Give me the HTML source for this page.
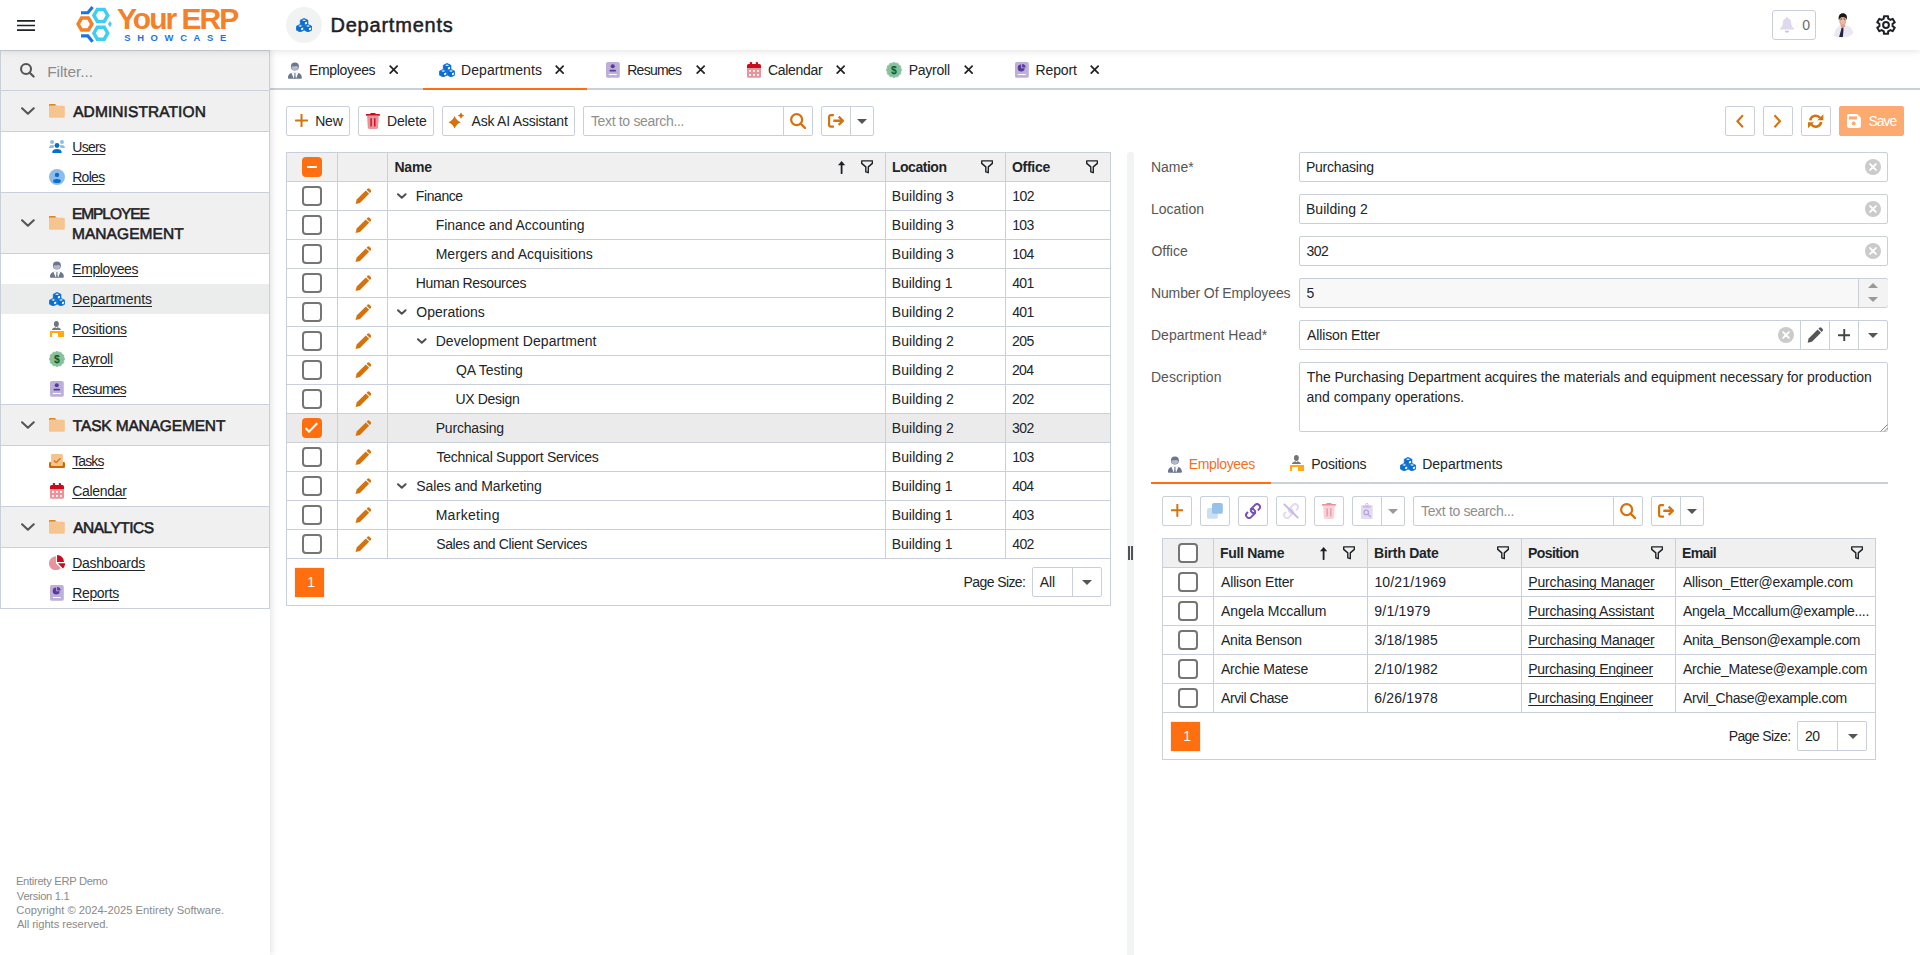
<!DOCTYPE html><html lang="en"><head><meta charset="utf-8"><title>Departments</title><style>
*{box-sizing:border-box;margin:0;padding:0}
html,body{width:1920px;height:955px;overflow:hidden;background:#fff}
body{font-family:"Liberation Sans",sans-serif;font-size:14px;color:#212529;position:relative}
.a{position:absolute}
.t{position:absolute;white-space:nowrap}
svg{display:block}
#hdr{left:0;top:0;width:1920px;height:50px;background:#fff;box-shadow:0 1px 7px rgba(0,0,0,.12);z-index:5}
#side{left:0;top:50px;width:270px;height:905px;background:#fff;z-index:4;box-shadow:1px 0 7px rgba(0,0,0,.13)}
.hl{position:absolute;left:0;width:270px;height:1px;background:#c9d0da}
.gh{position:absolute;left:1px;width:268px;background:#f0f0f0}
.btn{position:absolute;height:30px;border:1px solid #c9d0da;border-radius:2px;background:#fff}
.vl{position:absolute;width:1px;background:#c9d0da}
.cb{position:absolute;width:20px;height:20px;border:2px solid #757575;border-radius:4px;background:#fff}
.cb.on{border:none;background:#ff6f0f}
.pg{position:absolute;width:29px;height:29px;background:#ff6f0f;color:#fff;box-shadow:0 0 0 0.6px #f3e6da}
h1,h2{font-weight:normal;font-size:inherit}
u{text-decoration:underline;text-underline-offset:1.5px;text-decoration-thickness:1px}
</style></head><body>
<header id="hdr" class="a">
<div class="a" style="left:17px;top:19.6px"><svg width="18" height="11" viewBox="0 0 18 11" ><path d="M0 0.9h18M0 5.5h18M0 10.1h18" stroke="#1d2126" stroke-width="1.7" fill="none"/></svg></div>
<div class="a" style="left:70px;top:0px"><svg width="180" height="48" viewBox="0 0 180 48" ><polygon points="21.90,24.10 18.45,30.08 11.55,30.08 8.10,24.10 11.55,18.12 18.45,18.12" fill="none" stroke="#f4802a" stroke-width="3.5" stroke-linejoin="miter"/><polygon points="37.70,15.40 34.25,21.38 27.35,21.38 23.90,15.40 27.35,9.42 34.25,9.42" fill="none" stroke="#3fcdf3" stroke-width="3.5" stroke-linejoin="miter"/><polygon points="37.70,33.20 34.25,39.18 27.35,39.18 23.90,33.20 27.35,27.22 34.25,27.22" fill="none" stroke="#3fcdf3" stroke-width="3.5" stroke-linejoin="miter"/><path d="M11 12.8 L17.8 12.8 L22.6 6.9" fill="none" stroke="#1f72e2" stroke-width="3.1"/><path d="M11 35.9 L17.8 35.9 L22.6 41.8" fill="none" stroke="#1f72e2" stroke-width="3.1"/><path d="M38 24.1 L39.9 21 L41.8 24.1 L39.9 27.2 Z" fill="#3fcdf3"/><text x="47" y="28.6" font-family="Liberation Sans, sans-serif" font-weight="bold" font-size="30" fill="#f4802a" textLength="122.3" lengthAdjust="spacing">Your ERP</text><text x="54.2" y="40.8" font-family="Liberation Sans, sans-serif" font-weight="bold" font-size="9.4" fill="#1f72e2" letter-spacing="6.7">SHOWCASE</text></svg></div>
<div class="a" style="left:286px;top:7px;width:36px;height:36px;border-radius:18px;background:#f1f2f2"></div>
<div class="a" style="left:296px;top:18px"><svg width="16.2" height="14.4" viewBox="0 0 16.2 14.4" ><path d="M4.3 2.3 L8.1 0.4 L11.9 2.3 L11.9 6.1 L8.1 8 L4.3 6.1Z" fill="#0a6ed1" stroke="#0a6ed1" stroke-width="0.8" stroke-linejoin="round"/><path d="M0.4 8.3 L4.2 6.4 L8.0 8.3 L8.0 12.1 L4.2 14.0 L0.4 12.1Z" fill="#0a6ed1" stroke="#0a6ed1" stroke-width="0.8" stroke-linejoin="round"/><path d="M8.2 8.3 L12.0 6.4 L15.8 8.3 L15.8 12.1 L12.0 14.0 L8.2 12.1Z" fill="#0a6ed1" stroke="#0a6ed1" stroke-width="0.8" stroke-linejoin="round"/><path d="M6.050000000000001 2.15 L8.05 1.4 L10.05 2.15 L8.05 2.9Z" fill="#fff"/><path d="M8.9 4.5 L11.0 3.65 L11.0 5.75 L8.9 6.6Z" fill="#fff"/><path d="M2.3 7.9 L4.3 7.15 L6.3 7.9 L4.3 8.65Z" fill="#fff"/><path d="M5.1499999999999995 10.25 L7.25 9.4 L7.25 11.5 L5.1499999999999995 12.350000000000001Z" fill="#fff"/><path d="M10.1 7.9 L12.1 7.15 L14.1 7.9 L12.1 8.65Z" fill="#fff"/><path d="M12.95 10.25 L15.05 9.4 L15.05 11.5 L12.95 12.350000000000001Z" fill="#fff"/></svg></div>
<h1 class="t" style="left:330.46px;top:12px;line-height:26px;font-size:20px;letter-spacing:0.787px;color:#1d2126;-webkit-text-stroke:0.5px #1d2126;">Departments</h1>
<div class="a" style="left:1772px;top:10px;width:44px;height:30px;border:1px solid #c9d0da;border-radius:3px"></div>
<div class="a" style="left:1780px;top:17px"><svg width="14" height="16" viewBox="0 0 14 16" ><path d="M7 0.9 C4.2 0.9 2.8 3.2 2.8 5.8 C2.8 8.8 1.6 10.4 0 11.6 L0 12.6 L14 12.6 L14 11.6 C12.4 10.4 11.2 8.8 11.2 5.8 C11.2 3.2 9.8 0.9 7 0.9Z" fill="#e0d8ef"/><circle cx="7" cy="1" r="1" fill="#e0d8ef"/><path d="M5 13.8 L9 13.8 A2 2 0 0 1 5 13.8Z" fill="#cbbbe9"/></svg></div>
<span class="t" style="left:1802.15px;top:16px;line-height:19px;color:#6a6a6a;">0</span>
<div class="a" style="left:1831px;top:12px"><svg width="24" height="26" viewBox="0 0 24 26" ><path d="M3 24 C3.4 17.6 7 13.6 11.6 13 C17 12.6 21.6 15.6 22.2 21 C20 24.2 16.4 25.4 12 25.4 C8.6 25.4 5.4 25.2 3 24Z" fill="#ebe7f3"/><path d="M9.6 11.6 L14 11.6 L14.2 14.6 L11.6 16.4 L9.6 14.6Z" fill="#d9a28c"/><path d="M10.5 15.7 L12.3 15.7 L12.5 17.5 L11.9 24.9 L8.1 24.9 L10.2 17.5Z" fill="#25254a"/><ellipse cx="11.7" cy="8.7" rx="3.4" ry="4.5" fill="#dfa992"/><ellipse cx="11.7" cy="9.6" rx="2.2" ry="2.6" fill="#e8bba6"/><path d="M7.9 8.2 C6.8 3.6 9.2 1.3 11.8 1.3 C14.8 1.3 16.8 3.4 15.6 8 C15 5.8 13.8 4.7 11.6 4.9 C9.6 5.1 8.6 6.2 7.9 8.2Z" fill="#1f1613"/><path d="M9.4 7.2 L11 7 M12.6 7 L14.2 7.2" stroke="#5a3b30" stroke-width="0.9"/></svg></div>
<div class="a" style="left:1876px;top:15px"><svg width="20" height="20" viewBox="0 0 20 20" ><polygon points="7.95,1.13 12.05,1.13 12.18,3.67 14.40,4.94 16.66,3.79 18.70,7.34 16.58,8.72 16.58,11.28 18.70,12.66 16.66,16.21 14.40,15.06 12.18,16.33 12.05,18.87 7.95,18.87 7.82,16.33 5.60,15.06 3.34,16.21 1.30,12.66 3.42,11.28 3.42,8.72 1.30,7.34 3.34,3.79 5.60,4.94 7.82,3.67" fill="none" stroke="#1d2126" stroke-width="2" stroke-linejoin="round"/><circle cx="10" cy="10" r="2.9" fill="none" stroke="#1d2126" stroke-width="2"/></svg></div>
</header>
<nav id="side" class="a">
<div class="a" style="left:0px;top:0px;width:270px;height:559px;border:1px solid #c9d0da;border-bottom:none"></div>
<div class="gh" style="top:1px;height:39px"></div>
<div class="a" style="left:20.2px;top:13.299999999999997px"><svg width="14.6" height="14.6" viewBox="0 0 16.1 16.1" ><circle cx="6.65" cy="6.65" r="5.5" fill="none" stroke="#555" stroke-width="2.3"/><path d="M10.7 10.7 L15 15" stroke="#555" stroke-width="2.4" stroke-linecap="round"/></svg></div>
<span class="t" style="left:47.13px;top:11px;line-height:21px;font-size:15.5px;letter-spacing:-0.078px;color:#8c8c8c;">Filter...</span>
<div class="hl" style="top:40px"></div>
<div class="gh" style="top:41px;height:40px"></div>
<div class="hl" style="top:81px"></div>
<div class="a" style="left:21.2px;top:57.099999999999994px"><svg width="13.8" height="8.23" viewBox="0 0 13.80 8.23" ><path d="M1.05 1.26 L6.90 6.76 L12.75 1.26" fill="none" stroke="#555" stroke-width="2.1" stroke-linecap="round" stroke-linejoin="round"/></svg></div>
<div class="a" style="left:49.1px;top:54px"><svg width="15.8" height="13.8" viewBox="0.5 0.6 16 13.8" ><path d="M0.5 1.6 Q0.5 0.6 1.5 0.6 L6 0.6 Q6.8 0.6 7.4 1.2 L8.4 2.4 L2 2.4 Q0.5 2.4 0.5 3.6Z" fill="#d98324"/><path d="M0.5 3.6 Q0.5 2.4 1.8 2.4 L15.2 2.4 Q16.5 2.4 16.5 3.6 L16.5 13.2 Q16.5 14.4 15.2 14.4 L1.8 14.4 Q0.5 14.4 0.5 13.2Z" fill="#f6c48e"/></svg></div>
<h2 class="t" style="left:73.17px;top:52px;line-height:21px;font-size:15.5px;letter-spacing:0.095px;color:#1d2126;-webkit-text-stroke:0.55px #1d2126;text-rendering:geometricPrecision;">ADMINISTRATION</h2>
<div class="a" style="left:49px;top:90.1px"><svg width="16" height="13" viewBox="0 0 16 13" ><circle cx="3.05" cy="2" r="2" fill="#8bbcea"/><circle cx="12.95" cy="2" r="2" fill="#8bbcea"/><path d="M0 7.9 C0.2 6 1.4 5 3 5 C4 5 4.8 5.4 5.2 6 L4.4 7.9Z" fill="#8bbcea"/><path d="M16 7.9 C15.8 6 14.6 5 13 5 C12 5 11.2 5.4 10.8 6 L11.6 7.9Z" fill="#8bbcea"/><circle cx="8" cy="5.5" r="2.45" fill="#0a6ed1"/><path d="M3.2 12.2 C3.4 10 5.4 8.9 8 8.9 C10.6 8.9 12.6 10 12.8 12.2 Q12.8 12.9 12.1 12.9 L3.9 12.9 Q3.2 12.9 3.2 12.2Z" fill="#0a6ed1"/></svg></div>
<a class="t" style="left:72.20px;top:88px;line-height:19px;letter-spacing:-0.672px;"><u>Users</u></a>
<div class="a" style="left:49px;top:119.19999999999999px"><svg width="16" height="16" viewBox="0 0 16 16" ><circle cx="8" cy="8" r="8" fill="#8bbcea"/><circle cx="8" cy="5.9" r="2.2" fill="#0a6ed1"/><ellipse cx="8" cy="12" rx="3.9" ry="2.1" fill="#0a6ed1"/></svg></div>
<a class="t" style="left:72.20px;top:118px;line-height:19px;letter-spacing:-0.699px;"><u>Roles</u></a>
<div class="hl" style="top:142px"></div>
<div class="gh" style="top:143px;height:60px"></div>
<div class="hl" style="top:203px"></div>
<div class="a" style="left:21.2px;top:169.1px"><svg width="13.8" height="8.23" viewBox="0 0 13.80 8.23" ><path d="M1.05 1.26 L6.90 6.76 L12.75 1.26" fill="none" stroke="#555" stroke-width="2.1" stroke-linecap="round" stroke-linejoin="round"/></svg></div>
<div class="a" style="left:49.1px;top:166px"><svg width="15.8" height="13.8" viewBox="0.5 0.6 16 13.8" ><path d="M0.5 1.6 Q0.5 0.6 1.5 0.6 L6 0.6 Q6.8 0.6 7.4 1.2 L8.4 2.4 L2 2.4 Q0.5 2.4 0.5 3.6Z" fill="#d98324"/><path d="M0.5 3.6 Q0.5 2.4 1.8 2.4 L15.2 2.4 Q16.5 2.4 16.5 3.6 L16.5 13.2 Q16.5 14.4 15.2 14.4 L1.8 14.4 Q0.5 14.4 0.5 13.2Z" fill="#f6c48e"/></svg></div>
<h2 class="t" style="left:71.93px;top:154px;line-height:21px;font-size:15.5px;letter-spacing:-1.049px;color:#1d2126;-webkit-text-stroke:0.55px #1d2126;text-rendering:geometricPrecision;">EMPLOYEE</h2>
<h2 class="t" style="left:71.93px;top:174px;line-height:21px;font-size:15.5px;letter-spacing:0.082px;color:#1d2126;-webkit-text-stroke:0.55px #1d2126;text-rendering:geometricPrecision;">MANAGEMENT</h2>
<div class="a" style="left:49px;top:211px"><svg width="16" height="17" viewBox="0 0 16 17" ><circle cx="7.9" cy="4.5" r="4" fill="#6a778d"/><path d="M4.5 4.9 C5.6 3.7 6.8 4.9 7.9 4.3 C9 3.7 10.2 3.9 11.3 4.9 C11.3 7.2 9.8 8.2 7.9 8.2 C6 8.2 4.5 7.2 4.5 4.9Z" fill="#b4b8cc"/><path d="M0.9 15.7 C0.9 12.6 3 11 5 10.7 L10.8 10.7 C12.8 11 14.9 12.6 14.9 15.7 Q14.9 16.7 13.9 16.7 L1.9 16.7 Q0.9 16.7 0.9 15.7Z" fill="#6a778d"/><path d="M4.3 10.5 L11.5 10.5 L9.3 16.1 L6.5 16.1Z" fill="#fff"/><path d="M7.1 10.9 L8.7 10.9 L8.45 11.9 L9 16.7 L6.8 16.7 L7.35 11.9Z" fill="#7c889c"/></svg></div>
<a class="t" style="left:72.20px;top:210px;line-height:19px;letter-spacing:-0.373px;"><u>Employees</u></a>
<div class="a" style="left:1px;top:234px;width:268px;height:30px;background:#ebeded"></div>
<div class="a" style="left:49px;top:241.89999999999998px"><svg width="16.2" height="14.4" viewBox="0 0 16.2 14.4" ><path d="M4.3 2.3 L8.1 0.4 L11.9 2.3 L11.9 6.1 L8.1 8 L4.3 6.1Z" fill="#0a6ed1" stroke="#0a6ed1" stroke-width="0.8" stroke-linejoin="round"/><path d="M0.4 8.3 L4.2 6.4 L8.0 8.3 L8.0 12.1 L4.2 14.0 L0.4 12.1Z" fill="#0a6ed1" stroke="#0a6ed1" stroke-width="0.8" stroke-linejoin="round"/><path d="M8.2 8.3 L12.0 6.4 L15.8 8.3 L15.8 12.1 L12.0 14.0 L8.2 12.1Z" fill="#0a6ed1" stroke="#0a6ed1" stroke-width="0.8" stroke-linejoin="round"/><path d="M6.050000000000001 2.15 L8.05 1.4 L10.05 2.15 L8.05 2.9Z" fill="#fff"/><path d="M8.9 4.5 L11.0 3.65 L11.0 5.75 L8.9 6.6Z" fill="#fff"/><path d="M2.3 7.9 L4.3 7.15 L6.3 7.9 L4.3 8.65Z" fill="#fff"/><path d="M5.1499999999999995 10.25 L7.25 9.4 L7.25 11.5 L5.1499999999999995 12.350000000000001Z" fill="#fff"/><path d="M10.1 7.9 L12.1 7.15 L14.1 7.9 L12.1 8.65Z" fill="#fff"/><path d="M12.95 10.25 L15.05 9.4 L15.05 11.5 L12.95 12.350000000000001Z" fill="#fff"/></svg></div>
<a class="t" style="left:72.20px;top:240px;line-height:19px;letter-spacing:-0.031px;"><u>Departments</u></a>
<div class="a" style="left:50px;top:271px"><svg width="14.2" height="16.2" viewBox="0 0 14.2 16.2" ><ellipse cx="6.4" cy="3" rx="2.45" ry="3" fill="#747474"/><path d="M1.9 9 C2.2 7.4 3.6 6.6 5.2 6.2 L6.4 7.3 L7.6 6.2 C9.2 6.6 10.7 7.4 11 9Z" fill="#747474"/><path d="M0 9.95 L14.2 9.95 L14.2 16.2 L8.05 16.2 L8.05 12.1 L2.05 12.1 L2.05 16.2 L0 16.2Z" fill="#ffab10"/></svg></div>
<a class="t" style="left:72.20px;top:270px;line-height:19px;letter-spacing:-0.245px;"><u>Positions</u></a>
<div class="a" style="left:49px;top:301px"><svg width="16" height="16" viewBox="0 0 16 16" ><polygon points="8.00,0.10 9.81,1.24 11.95,1.16 12.95,3.05 14.84,4.05 14.76,6.19 15.90,8.00 14.76,9.81 14.84,11.95 12.95,12.95 11.95,14.84 9.81,14.76 8.00,15.90 6.19,14.76 4.05,14.84 3.05,12.95 1.16,11.95 1.24,9.81 0.10,8.00 1.24,6.19 1.16,4.05 3.05,3.05 4.05,1.16 6.19,1.24" fill="#88c09c" stroke="#88c09c" stroke-width="0.6" stroke-linejoin="round"/><text x="8" y="11.6" text-anchor="middle" font-family="Liberation Sans, sans-serif" font-weight="bold" font-size="10.4" fill="#0b5a24">$</text></svg></div>
<a class="t" style="left:72.20px;top:300px;line-height:19px;letter-spacing:-0.328px;"><u>Payroll</u></a>
<div class="a" style="left:50.2px;top:331px"><svg width="13.8" height="15.8" viewBox="0 0 13.8 15.8" ><rect x="0" y="0" width="13.8" height="15.8" rx="1.9" fill="#bdb0d8"/><circle cx="6.75" cy="4.25" r="2.05" fill="#5b3aa0"/><rect x="3.5" y="7.8" width="6.5" height="1.7" rx="0.85" fill="#5b3aa0"/><rect x="2.8" y="12" width="8" height="1.05" fill="#fff"/></svg></div>
<a class="t" style="left:72.20px;top:330px;line-height:19px;letter-spacing:-0.747px;"><u>Resumes</u></a>
<div class="hl" style="top:354px"></div>
<div class="gh" style="top:355px;height:40px"></div>
<div class="hl" style="top:395px"></div>
<div class="a" style="left:21.2px;top:371.1px"><svg width="13.8" height="8.23" viewBox="0 0 13.80 8.23" ><path d="M1.05 1.26 L6.90 6.76 L12.75 1.26" fill="none" stroke="#555" stroke-width="2.1" stroke-linecap="round" stroke-linejoin="round"/></svg></div>
<div class="a" style="left:49.1px;top:368px"><svg width="15.8" height="13.8" viewBox="0.5 0.6 16 13.8" ><path d="M0.5 1.6 Q0.5 0.6 1.5 0.6 L6 0.6 Q6.8 0.6 7.4 1.2 L8.4 2.4 L2 2.4 Q0.5 2.4 0.5 3.6Z" fill="#d98324"/><path d="M0.5 3.6 Q0.5 2.4 1.8 2.4 L15.2 2.4 Q16.5 2.4 16.5 3.6 L16.5 13.2 Q16.5 14.4 15.2 14.4 L1.8 14.4 Q0.5 14.4 0.5 13.2Z" fill="#f6c48e"/></svg></div>
<h2 class="t" style="left:72.85px;top:366px;line-height:21px;font-size:15.5px;letter-spacing:-0.159px;color:#1d2126;-webkit-text-stroke:0.55px #1d2126;text-rendering:geometricPrecision;">TASK MANAGEMENT</h2>
<div class="a" style="left:49px;top:403.9px"><svg width="16" height="14.2" viewBox="0 0 16 14.2" ><path d="M0 9.4 Q0 8.05 1.3 8.05 L14.7 8.05 Q16 8.05 16 9.4 L16 12.4 Q16 14.2 14.2 14.2 L1.8 14.2 Q0 14.2 0 12.4Z" fill="#cf6a00"/><rect x="2.05" y="0" width="11.85" height="12.1" rx="1.3" fill="#f4c48e"/><path d="M4.9 6.4 L7.1 8.6 L11.6 4.35" fill="none" stroke="#d9761a" stroke-width="1.4"/></svg></div>
<a class="t" style="left:72.20px;top:402px;line-height:19px;letter-spacing:-0.897px;"><u>Tasks</u></a>
<div class="a" style="left:50px;top:433.3px"><svg width="14" height="15.8" viewBox="0 0 14 15.8" ><path d="M0 5.8 L14 5.8 L14 14.2 Q14 15.8 12.4 15.8 L1.6 15.8 Q0 15.8 0 14.2Z" fill="#e8949c"/><path d="M0 6 L0 3.6 Q0 2 1.6 2 L12.4 2 Q14 2 14 3.6 L14 6Z" fill="#cc0a1e"/><rect x="2.9" y="0" width="2.1" height="3" rx="0.5" fill="#cc0a1e"/><rect x="8.9" y="0" width="2.1" height="3" rx="0.5" fill="#cc0a1e"/><rect x="2.05" y="8.05" width="1.9" height="1.8" fill="#fff"/><rect x="2.05" y="12" width="1.9" height="1.8" fill="#fff"/><rect x="6" y="8.05" width="1.9" height="1.8" fill="#fff"/><rect x="6" y="12" width="1.9" height="1.8" fill="#fff"/><rect x="10" y="8.05" width="1.9" height="1.8" fill="#fff"/><rect x="10" y="12" width="1.9" height="1.8" fill="#fff"/></svg></div>
<a class="t" style="left:72.20px;top:432px;line-height:19px;letter-spacing:-0.302px;"><u>Calendar</u></a>
<div class="hl" style="top:456px"></div>
<div class="gh" style="top:457px;height:40px"></div>
<div class="hl" style="top:497px"></div>
<div class="a" style="left:21.2px;top:473.1px"><svg width="13.8" height="8.23" viewBox="0 0 13.80 8.23" ><path d="M1.05 1.26 L6.90 6.76 L12.75 1.26" fill="none" stroke="#555" stroke-width="2.1" stroke-linecap="round" stroke-linejoin="round"/></svg></div>
<div class="a" style="left:49.1px;top:470px"><svg width="15.8" height="13.8" viewBox="0.5 0.6 16 13.8" ><path d="M0.5 1.6 Q0.5 0.6 1.5 0.6 L6 0.6 Q6.8 0.6 7.4 1.2 L8.4 2.4 L2 2.4 Q0.5 2.4 0.5 3.6Z" fill="#d98324"/><path d="M0.5 3.6 Q0.5 2.4 1.8 2.4 L15.2 2.4 Q16.5 2.4 16.5 3.6 L16.5 13.2 Q16.5 14.4 15.2 14.4 L1.8 14.4 Q0.5 14.4 0.5 13.2Z" fill="#f6c48e"/></svg></div>
<h2 class="t" style="left:73.17px;top:468px;line-height:21px;font-size:15.5px;letter-spacing:-0.518px;color:#1d2126;-webkit-text-stroke:0.55px #1d2126;text-rendering:geometricPrecision;">ANALYTICS</h2>
<div class="a" style="left:49px;top:504.9px"><svg width="16.1" height="15.3" viewBox="0 0 16.1 15.3" ><path d="M6.95 1.3500000000000005 A6.95 6.95 0 1 0 11.86 13.21 L6.95 8.3Z" fill="#e8949c"/><path d="M8.05 0 A7 7 0 0 1 15.05 6.95 L8.05 6.95Z" fill="#cc0a1e"/><path d="M8.9 8.3 L16.1 8.3 A7.2 7.2 0 0 1 13.99 13.39Z" fill="#cc0a1e"/></svg></div>
<a class="t" style="left:72.20px;top:504px;line-height:19px;letter-spacing:-0.279px;"><u>Dashboards</u></a>
<div class="a" style="left:50.1px;top:535.2px"><svg width="13.8" height="15.8" viewBox="0 0 13.8 15.8" ><rect x="0" y="0" width="13.8" height="15.8" rx="1.9" fill="#bdb0d8"/><path d="M6.2 2.6 A3.5 3.5 0 1 0 9.7 6.3 L6.2 6.3Z" fill="#5b3aa0"/><path d="M7.1 1.9 A3.5 3.5 0 0 1 10.6 5.4 L7.1 5.4Z" fill="#5b3aa0"/><rect x="2.85" y="12" width="7.9" height="1.05" fill="#fff"/></svg></div>
<a class="t" style="left:72.20px;top:534px;line-height:19px;letter-spacing:-0.332px;"><u>Reports</u></a>
<div class="hl" style="top:558px"></div>
<span class="t" style="left:15.98px;top:824px;line-height:15px;font-size:11.2px;letter-spacing:-0.307px;color:#8a8a8a;">Entirety ERP Demo</span>
<span class="t" style="left:16.85px;top:839px;line-height:15px;font-size:11.2px;letter-spacing:-0.304px;color:#8a8a8a;">Version 1.1</span>
<span class="t" style="left:16.33px;top:853px;line-height:15px;font-size:11.2px;letter-spacing:0.013px;color:#8a8a8a;">Copyright © 2024-2025 Entirety Software.</span>
<span class="t" style="left:16.88px;top:867px;line-height:15px;font-size:11.2px;letter-spacing:-0.058px;color:#8a8a8a;">All rights reserved.</span>
</nav>
<div class="a" style="left:270px;top:88px;width:1650px;height:2px;background:#c9d0da"></div>
<div class="a" style="left:423px;top:88px;width:164px;height:2px;background:#ff6f0f"></div>
<div class="a" style="left:287px;top:61.5px"><svg width="16" height="17" viewBox="0 0 16 17" ><circle cx="7.9" cy="4.5" r="4" fill="#6a778d"/><path d="M4.5 4.9 C5.6 3.7 6.8 4.9 7.9 4.3 C9 3.7 10.2 3.9 11.3 4.9 C11.3 7.2 9.8 8.2 7.9 8.2 C6 8.2 4.5 7.2 4.5 4.9Z" fill="#b4b8cc"/><path d="M0.9 15.7 C0.9 12.6 3 11 5 10.7 L10.8 10.7 C12.8 11 14.9 12.6 14.9 15.7 Q14.9 16.7 13.9 16.7 L1.9 16.7 Q0.9 16.7 0.9 15.7Z" fill="#6a778d"/><path d="M4.3 10.5 L11.5 10.5 L9.3 16.1 L6.5 16.1Z" fill="#fff"/><path d="M7.1 10.9 L8.7 10.9 L8.45 11.9 L9 16.7 L6.8 16.7 L7.35 11.9Z" fill="#7c889c"/></svg></div>
<span class="t" style="left:308.95px;top:61px;line-height:19px;letter-spacing:-0.325px;">Employees</span>
<div class="a" style="left:388.8px;top:65px"><svg width="9.4" height="9.4" viewBox="0 0 9.4 9.4" ><path d="M0.7 0.7 L8.7 8.7 M8.7 0.7 L0.7 8.7" stroke="#222" stroke-width="1.7"/></svg></div>
<div class="a" style="left:438.9px;top:62.8px"><svg width="16.2" height="14.4" viewBox="0 0 16.2 14.4" ><path d="M4.3 2.3 L8.1 0.4 L11.9 2.3 L11.9 6.1 L8.1 8 L4.3 6.1Z" fill="#0a6ed1" stroke="#0a6ed1" stroke-width="0.8" stroke-linejoin="round"/><path d="M0.4 8.3 L4.2 6.4 L8.0 8.3 L8.0 12.1 L4.2 14.0 L0.4 12.1Z" fill="#0a6ed1" stroke="#0a6ed1" stroke-width="0.8" stroke-linejoin="round"/><path d="M8.2 8.3 L12.0 6.4 L15.8 8.3 L15.8 12.1 L12.0 14.0 L8.2 12.1Z" fill="#0a6ed1" stroke="#0a6ed1" stroke-width="0.8" stroke-linejoin="round"/><path d="M6.050000000000001 2.15 L8.05 1.4 L10.05 2.15 L8.05 2.9Z" fill="#fff"/><path d="M8.9 4.5 L11.0 3.65 L11.0 5.75 L8.9 6.6Z" fill="#fff"/><path d="M2.3 7.9 L4.3 7.15 L6.3 7.9 L4.3 8.65Z" fill="#fff"/><path d="M5.1499999999999995 10.25 L7.25 9.4 L7.25 11.5 L5.1499999999999995 12.350000000000001Z" fill="#fff"/><path d="M10.1 7.9 L12.1 7.15 L14.1 7.9 L12.1 8.65Z" fill="#fff"/><path d="M12.95 10.25 L15.05 9.4 L15.05 11.5 L12.95 12.350000000000001Z" fill="#fff"/></svg></div>
<span class="t" style="left:461.05px;top:61px;line-height:19px;letter-spacing:0.071px;">Departments</span>
<div class="a" style="left:554.6px;top:65px"><svg width="9.4" height="9.4" viewBox="0 0 9.4 9.4" ><path d="M0.7 0.7 L8.7 8.7 M8.7 0.7 L0.7 8.7" stroke="#222" stroke-width="1.7"/></svg></div>
<div class="a" style="left:606.2px;top:62px"><svg width="13.8" height="15.8" viewBox="0 0 13.8 15.8" ><rect x="0" y="0" width="13.8" height="15.8" rx="1.9" fill="#bdb0d8"/><circle cx="6.75" cy="4.25" r="2.05" fill="#5b3aa0"/><rect x="3.5" y="7.8" width="6.5" height="1.7" rx="0.85" fill="#5b3aa0"/><rect x="2.8" y="12" width="8" height="1.05" fill="#fff"/></svg></div>
<span class="t" style="left:627.25px;top:61px;line-height:19px;letter-spacing:-0.746px;">Resumes</span>
<div class="a" style="left:695.5px;top:65px"><svg width="9.4" height="9.4" viewBox="0 0 9.4 9.4" ><path d="M0.7 0.7 L8.7 8.7 M8.7 0.7 L0.7 8.7" stroke="#222" stroke-width="1.7"/></svg></div>
<div class="a" style="left:747px;top:62px"><svg width="14" height="15.8" viewBox="0 0 14 15.8" ><path d="M0 5.8 L14 5.8 L14 14.2 Q14 15.8 12.4 15.8 L1.6 15.8 Q0 15.8 0 14.2Z" fill="#e8949c"/><path d="M0 6 L0 3.6 Q0 2 1.6 2 L12.4 2 Q14 2 14 3.6 L14 6Z" fill="#cc0a1e"/><rect x="2.9" y="0" width="2.1" height="3" rx="0.5" fill="#cc0a1e"/><rect x="8.9" y="0" width="2.1" height="3" rx="0.5" fill="#cc0a1e"/><rect x="2.05" y="8.05" width="1.9" height="1.8" fill="#fff"/><rect x="2.05" y="12" width="1.9" height="1.8" fill="#fff"/><rect x="6" y="8.05" width="1.9" height="1.8" fill="#fff"/><rect x="6" y="12" width="1.9" height="1.8" fill="#fff"/><rect x="10" y="8.05" width="1.9" height="1.8" fill="#fff"/><rect x="10" y="12" width="1.9" height="1.8" fill="#fff"/></svg></div>
<span class="t" style="left:767.99px;top:61px;line-height:19px;letter-spacing:-0.31px;">Calendar</span>
<div class="a" style="left:835.5px;top:65px"><svg width="9.4" height="9.4" viewBox="0 0 9.4 9.4" ><path d="M0.7 0.7 L8.7 8.7 M8.7 0.7 L0.7 8.7" stroke="#222" stroke-width="1.7"/></svg></div>
<div class="a" style="left:886px;top:62px"><svg width="16" height="16" viewBox="0 0 16 16" ><polygon points="8.00,0.10 9.81,1.24 11.95,1.16 12.95,3.05 14.84,4.05 14.76,6.19 15.90,8.00 14.76,9.81 14.84,11.95 12.95,12.95 11.95,14.84 9.81,14.76 8.00,15.90 6.19,14.76 4.05,14.84 3.05,12.95 1.16,11.95 1.24,9.81 0.10,8.00 1.24,6.19 1.16,4.05 3.05,3.05 4.05,1.16 6.19,1.24" fill="#88c09c" stroke="#88c09c" stroke-width="0.6" stroke-linejoin="round"/><text x="8" y="11.6" text-anchor="middle" font-family="Liberation Sans, sans-serif" font-weight="bold" font-size="10.4" fill="#0b5a24">$</text></svg></div>
<span class="t" style="left:908.65px;top:61px;line-height:19px;letter-spacing:-0.218px;">Payroll</span>
<div class="a" style="left:963.5px;top:65px"><svg width="9.4" height="9.4" viewBox="0 0 9.4 9.4" ><path d="M0.7 0.7 L8.7 8.7 M8.7 0.7 L0.7 8.7" stroke="#222" stroke-width="1.7"/></svg></div>
<div class="a" style="left:1015.1px;top:62px"><svg width="13.8" height="15.8" viewBox="0 0 13.8 15.8" ><rect x="0" y="0" width="13.8" height="15.8" rx="1.9" fill="#bdb0d8"/><path d="M6.2 2.6 A3.5 3.5 0 1 0 9.7 6.3 L6.2 6.3Z" fill="#5b3aa0"/><path d="M7.1 1.9 A3.5 3.5 0 0 1 10.6 5.4 L7.1 5.4Z" fill="#5b3aa0"/><rect x="2.85" y="12" width="7.9" height="1.05" fill="#fff"/></svg></div>
<span class="t" style="left:1035.55px;top:61px;line-height:19px;letter-spacing:-0.134px;">Report</span>
<div class="a" style="left:1090px;top:65px"><svg width="9.4" height="9.4" viewBox="0 0 9.4 9.4" ><path d="M0.7 0.7 L8.7 8.7 M8.7 0.7 L0.7 8.7" stroke="#222" stroke-width="1.7"/></svg></div>
<div class="btn" style="left:286px;top:106px;width:64px;"><div class="a" style="left:7.6px;top:7.1px"><svg width="13" height="13" viewBox="0 0 13 13" ><path d="M6.5 0.6 L6.5 12.4 M0.6 6.5 L12.4 6.5" stroke="#d6720c" stroke-width="2" stroke-linecap="round"/></svg></div><span class="t" style="left:28.15px;top:5px;line-height:19px;letter-spacing:-0.196px;">New</span></div>
<div class="btn" style="left:358px;top:106px;width:76px;"><div class="a" style="left:7px;top:6.1px"><svg width="13.9" height="15.9" viewBox="0 0 13.9 15.9" ><path d="M0 1.6 Q0 1 0.6 1 L4 1 L4.6 0.3 Q4.9 0 5.3 0 L8.6 0 Q9 0 9.3 0.3 L9.9 1 L13.3 1 Q13.9 1 13.9 1.6 L13.9 2.8 L0 2.8Z" fill="#cc0a1e"/><path d="M1.1 2.8 L12.8 2.8 L12.1 14.4 Q12 15.9 10.5 15.9 L3.4 15.9 Q1.9 15.9 1.8 14.4Z" fill="#e8949c"/><path d="M5.1 5.8 L5.1 12.9 M8.8 5.8 L8.8 12.9" stroke="#cc0a1e" stroke-width="1.4" stroke-linecap="round"/></svg></div><span class="t" style="left:28.05px;top:5px;line-height:19px;letter-spacing:-0.16px;">Delete</span></div>
<div class="btn" style="left:442px;top:106px;width:133px;"><div class="a" style="left:5.3px;top:5.2px"><svg width="17" height="17" viewBox="0 0 17 17" ><path d="M6.6 3.999999999999999 Q8.336 8.463999999999999 12.8 10.2 Q8.336 11.936 6.6 16.4 Q4.863999999999999 11.936 0.39999999999999947 10.2 Q4.863999999999999 8.463999999999999 6.6 3.999999999999999Z" fill="#d6720c"/><path d="M13 0.3999999999999999 Q13.896 2.7039999999999997 16.2 3.6 Q13.896 4.496 13 6.800000000000001 Q12.104 4.496 9.8 3.6 Q12.104 2.7039999999999997 13 0.3999999999999999Z" fill="#d6720c"/></svg></div><span class="t" style="left:28.57px;top:5px;line-height:19px;letter-spacing:-0.225px;">Ask AI Assistant</span></div>
<div class="btn" style="left:583px;top:106px;width:230px;"><span class="t" style="left:6.89px;top:5px;line-height:19px;letter-spacing:-0.327px;color:#8f8f8f;">Text to search...</span><div class="vl" style="left:199px;top:0;height:28px"></div><div class="a" style="left:205.9px;top:5.9px"><svg width="16.1" height="16.1" viewBox="0 0 16.1 16.1" ><circle cx="6.65" cy="6.65" r="5.5" fill="none" stroke="#d6720c" stroke-width="2.3"/><path d="M10.7 10.7 L15 15" stroke="#d6720c" stroke-width="2.4" stroke-linecap="round"/></svg></div></div>
<div class="btn" style="left:821px;top:106px;width:53px;"><div class="a" style="left:6px;top:7.1px"><svg width="16.4" height="13.8" viewBox="0 0 16.4 13.8" ><path d="M5.9 1.1 L3 1.1 Q1.1 1.1 1.1 3 L1.1 10.8 Q1.1 12.7 3 12.7 L5.9 12.7" fill="none" stroke="#d6720c" stroke-width="2.2"/><path d="M5.3 6.75 L14.6 6.75 M10.7 2.7 L15 6.75 L10.7 10.9" fill="none" stroke="#d6720c" stroke-width="2.3" stroke-linejoin="round"/></svg></div><div class="vl" style="left:28px;top:0;height:28px"></div><div class="a" style="left:34.8px;top:12px"><svg width="10" height="5" viewBox="0 0 10 5" ><path d="M0 0 L10 0 L5 5Z" fill="#555"/></svg></div></div>
<section class="a" style="left:286px;top:152px;width:825px;height:454px;border:1px solid #c9d0da;background:#fff">
<div class="a" style="left:0px;top:0px;width:823px;height:28px;background:#f0f0f0"></div>
<div class="a" style="left:0px;top:261px;width:823px;height:28px;background:#ebebeb"></div>
<div class="a" style="left:0px;top:28px;width:823px;height:1px;background:#c9d0da"></div>
<div class="a" style="left:0px;top:57px;width:823px;height:1px;background:#c9d0da"></div>
<div class="a" style="left:0px;top:86px;width:823px;height:1px;background:#c9d0da"></div>
<div class="a" style="left:0px;top:115px;width:823px;height:1px;background:#c9d0da"></div>
<div class="a" style="left:0px;top:144px;width:823px;height:1px;background:#c9d0da"></div>
<div class="a" style="left:0px;top:173px;width:823px;height:1px;background:#c9d0da"></div>
<div class="a" style="left:0px;top:202px;width:823px;height:1px;background:#c9d0da"></div>
<div class="a" style="left:0px;top:231px;width:823px;height:1px;background:#c9d0da"></div>
<div class="a" style="left:0px;top:260px;width:823px;height:1px;background:#c9d0da"></div>
<div class="a" style="left:0px;top:289px;width:823px;height:1px;background:#c9d0da"></div>
<div class="a" style="left:0px;top:318px;width:823px;height:1px;background:#c9d0da"></div>
<div class="a" style="left:0px;top:347px;width:823px;height:1px;background:#c9d0da"></div>
<div class="a" style="left:0px;top:376px;width:823px;height:1px;background:#c9d0da"></div>
<div class="a" style="left:0px;top:405px;width:823px;height:1px;background:#c9d0da"></div>
<div class="a" style="left:50px;top:0px;width:1px;height:406px;background:#c9d0da"></div>
<div class="a" style="left:100px;top:0px;width:1px;height:406px;background:#c9d0da"></div>
<div class="a" style="left:598px;top:0px;width:1px;height:406px;background:#c9d0da"></div>
<div class="a" style="left:718px;top:0px;width:1px;height:406px;background:#c9d0da"></div>
<div class="cb on" style="left:15px;top:4px"><div class="a" style="left:5px;top:9px"><svg width="10" height="2" viewBox="0 0 10 2" ><rect width="10" height="2" rx="0.5" fill="#fff"/></svg></div></div>
<b class="t" style="left:107.46px;top:5px;line-height:19px;font-weight:bold;letter-spacing:-0.205px;">Name</b>
<div class="a" style="left:550.9px;top:7.699999999999989px"><svg width="7.2" height="13" viewBox="0 0 7.2 13" ><path d="M3.6 0 L7.2 4.2 L0 4.2Z" fill="#1d2126"/><path d="M3.6 3.5 L3.6 12.2" stroke="#1d2126" stroke-width="1.8" stroke-linecap="round"/></svg></div>
<div class="a" style="left:573.9px;top:7px"><svg width="12.1" height="13.8" viewBox="0 0 12.1 13.8" ><path d="M0.7 0.9 L11.4 0.9 L11.4 3.4 L7.3 6.9 L7.3 12.7 L4.8 11.8 L4.8 6.9 L0.7 3.4Z" fill="none" stroke="#1d2126" stroke-width="1.4" stroke-linejoin="round"/></svg></div>
<b class="t" style="left:604.96px;top:5px;line-height:19px;font-weight:bold;letter-spacing:-0.475px;">Location</b>
<div class="a" style="left:694.3px;top:7px"><svg width="12.1" height="13.8" viewBox="0 0 12.1 13.8" ><path d="M0.7 0.9 L11.4 0.9 L11.4 3.4 L7.3 6.9 L7.3 12.7 L4.8 11.8 L4.8 6.9 L0.7 3.4Z" fill="none" stroke="#1d2126" stroke-width="1.4" stroke-linejoin="round"/></svg></div>
<b class="t" style="left:725.03px;top:5px;line-height:19px;font-weight:bold;letter-spacing:-0.305px;">Office</b>
<div class="a" style="left:799px;top:7px"><svg width="12.1" height="13.8" viewBox="0 0 12.1 13.8" ><path d="M0.7 0.9 L11.4 0.9 L11.4 3.4 L7.3 6.9 L7.3 12.7 L4.8 11.8 L4.8 6.9 L0.7 3.4Z" fill="none" stroke="#1d2126" stroke-width="1.4" stroke-linejoin="round"/></svg></div>
<div class="cb" style="left:15px;top:33px"></div>
<div class="a" style="left:67.60000000000002px;top:34.80000000000001px"><svg width="16.6" height="16.6" viewBox="0 0 16 16" ><path d="M0.6 15.4 L1.6 11.2 L10.4 2.4 L13.6 5.6 L4.8 14.4Z" fill="#d6720c"/><path d="M11.2 1.6 L12 0.8 Q13 -0.1 14 0.8 L15.2 2 Q16.1 3 15.2 4 L14.4 4.8Z" fill="#d6720c"/></svg></div>
<div class="a" style="left:110.19999999999999px;top:40.30000000000001px"><svg width="9.6" height="6.17" viewBox="0 0 9.60 6.17" ><path d="M1.00 1.20 L4.80 4.77 L8.60 1.20" fill="none" stroke="#505050" stroke-width="2.0" stroke-linecap="round" stroke-linejoin="round"/></svg></div>
<span class="t" style="left:128.85px;top:34px;line-height:19px;letter-spacing:-0.423px;">Finance</span>
<span class="t" style="left:604.75px;top:34px;line-height:19px;letter-spacing:0.064px;">Building 3</span>
<span class="t" style="left:725.13px;top:34px;line-height:19px;letter-spacing:-0.494px;">102</span>
<div class="cb" style="left:15px;top:62px"></div>
<div class="a" style="left:67.60000000000002px;top:63.80000000000001px"><svg width="16.6" height="16.6" viewBox="0 0 16 16" ><path d="M0.6 15.4 L1.6 11.2 L10.4 2.4 L13.6 5.6 L4.8 14.4Z" fill="#d6720c"/><path d="M11.2 1.6 L12 0.8 Q13 -0.1 14 0.8 L15.2 2 Q16.1 3 15.2 4 L14.4 4.8Z" fill="#d6720c"/></svg></div>
<span class="t" style="left:148.65px;top:63px;line-height:19px;letter-spacing:-0.028px;">Finance and Accounting</span>
<span class="t" style="left:604.75px;top:63px;line-height:19px;letter-spacing:0.064px;">Building 3</span>
<span class="t" style="left:725.13px;top:63px;line-height:19px;letter-spacing:-0.538px;">103</span>
<div class="cb" style="left:15px;top:91px"></div>
<div class="a" style="left:67.60000000000002px;top:92.80000000000001px"><svg width="16.6" height="16.6" viewBox="0 0 16 16" ><path d="M0.6 15.4 L1.6 11.2 L10.4 2.4 L13.6 5.6 L4.8 14.4Z" fill="#d6720c"/><path d="M11.2 1.6 L12 0.8 Q13 -0.1 14 0.8 L15.2 2 Q16.1 3 15.2 4 L14.4 4.8Z" fill="#d6720c"/></svg></div>
<span class="t" style="left:148.65px;top:92px;line-height:19px;letter-spacing:0.028px;">Mergers and Acquisitions</span>
<span class="t" style="left:604.75px;top:92px;line-height:19px;letter-spacing:0.064px;">Building 3</span>
<span class="t" style="left:725.13px;top:92px;line-height:19px;letter-spacing:-0.641px;">104</span>
<div class="cb" style="left:15px;top:120px"></div>
<div class="a" style="left:67.60000000000002px;top:121.80000000000001px"><svg width="16.6" height="16.6" viewBox="0 0 16 16" ><path d="M0.6 15.4 L1.6 11.2 L10.4 2.4 L13.6 5.6 L4.8 14.4Z" fill="#d6720c"/><path d="M11.2 1.6 L12 0.8 Q13 -0.1 14 0.8 L15.2 2 Q16.1 3 15.2 4 L14.4 4.8Z" fill="#d6720c"/></svg></div>
<span class="t" style="left:128.85px;top:121px;line-height:19px;letter-spacing:-0.385px;">Human Resources</span>
<span class="t" style="left:604.75px;top:121px;line-height:19px;letter-spacing:-0.084px;">Building 1</span>
<span class="t" style="left:725.28px;top:121px;line-height:19px;letter-spacing:-0.677px;">401</span>
<div class="cb" style="left:15px;top:149px"></div>
<div class="a" style="left:67.60000000000002px;top:150.8px"><svg width="16.6" height="16.6" viewBox="0 0 16 16" ><path d="M0.6 15.4 L1.6 11.2 L10.4 2.4 L13.6 5.6 L4.8 14.4Z" fill="#d6720c"/><path d="M11.2 1.6 L12 0.8 Q13 -0.1 14 0.8 L15.2 2 Q16.1 3 15.2 4 L14.4 4.8Z" fill="#d6720c"/></svg></div>
<div class="a" style="left:110.19999999999999px;top:156.3px"><svg width="9.6" height="6.17" viewBox="0 0 9.60 6.17" ><path d="M1.00 1.20 L4.80 4.77 L8.60 1.20" fill="none" stroke="#505050" stroke-width="2.0" stroke-linecap="round" stroke-linejoin="round"/></svg></div>
<span class="t" style="left:129.34px;top:150px;line-height:19px;letter-spacing:-0.001px;">Operations</span>
<span class="t" style="left:604.75px;top:150px;line-height:19px;letter-spacing:0.051px;">Building 2</span>
<span class="t" style="left:725.28px;top:150px;line-height:19px;letter-spacing:-0.677px;">401</span>
<div class="cb" style="left:15px;top:178px"></div>
<div class="a" style="left:67.60000000000002px;top:179.8px"><svg width="16.6" height="16.6" viewBox="0 0 16 16" ><path d="M0.6 15.4 L1.6 11.2 L10.4 2.4 L13.6 5.6 L4.8 14.4Z" fill="#d6720c"/><path d="M11.2 1.6 L12 0.8 Q13 -0.1 14 0.8 L15.2 2 Q16.1 3 15.2 4 L14.4 4.8Z" fill="#d6720c"/></svg></div>
<div class="a" style="left:130.0px;top:185.3px"><svg width="9.6" height="6.17" viewBox="0 0 9.60 6.17" ><path d="M1.00 1.20 L4.80 4.77 L8.60 1.20" fill="none" stroke="#505050" stroke-width="2.0" stroke-linecap="round" stroke-linejoin="round"/></svg></div>
<span class="t" style="left:148.65px;top:179px;line-height:19px;letter-spacing:0.063px;">Development Department</span>
<span class="t" style="left:604.75px;top:179px;line-height:19px;letter-spacing:0.051px;">Building 2</span>
<span class="t" style="left:724.90px;top:179px;line-height:19px;letter-spacing:-0.533px;">205</span>
<div class="cb" style="left:15px;top:207px"></div>
<div class="a" style="left:67.60000000000002px;top:208.8px"><svg width="16.6" height="16.6" viewBox="0 0 16 16" ><path d="M0.6 15.4 L1.6 11.2 L10.4 2.4 L13.6 5.6 L4.8 14.4Z" fill="#d6720c"/><path d="M11.2 1.6 L12 0.8 Q13 -0.1 14 0.8 L15.2 2 Q16.1 3 15.2 4 L14.4 4.8Z" fill="#d6720c"/></svg></div>
<span class="t" style="left:168.94px;top:208px;line-height:19px;letter-spacing:-0.054px;">QA Testing</span>
<span class="t" style="left:604.75px;top:208px;line-height:19px;letter-spacing:0.051px;">Building 2</span>
<span class="t" style="left:724.90px;top:208px;line-height:19px;letter-spacing:-0.622px;">204</span>
<div class="cb" style="left:15px;top:236px"></div>
<div class="a" style="left:67.60000000000002px;top:237.8px"><svg width="16.6" height="16.6" viewBox="0 0 16 16" ><path d="M0.6 15.4 L1.6 11.2 L10.4 2.4 L13.6 5.6 L4.8 14.4Z" fill="#d6720c"/><path d="M11.2 1.6 L12 0.8 Q13 -0.1 14 0.8 L15.2 2 Q16.1 3 15.2 4 L14.4 4.8Z" fill="#d6720c"/></svg></div>
<span class="t" style="left:168.52px;top:237px;line-height:19px;letter-spacing:-0.341px;">UX Design</span>
<span class="t" style="left:604.75px;top:237px;line-height:19px;letter-spacing:0.051px;">Building 2</span>
<span class="t" style="left:724.90px;top:237px;line-height:19px;letter-spacing:-0.475px;">202</span>
<div class="cb on" style="left:15px;top:265px"><div class="a" style="left:2.4px;top:3.3px"><svg width="14" height="12" viewBox="0 0 14 12" ><path d="M1.6 7 L5 10.7 L13.2 2.2" fill="none" stroke="#fff" stroke-width="2" stroke-linecap="butt" stroke-linejoin="miter"/></svg></div></div>
<div class="a" style="left:67.60000000000002px;top:266.8px"><svg width="16.6" height="16.6" viewBox="0 0 16 16" ><path d="M0.6 15.4 L1.6 11.2 L10.4 2.4 L13.6 5.6 L4.8 14.4Z" fill="#d6720c"/><path d="M11.2 1.6 L12 0.8 Q13 -0.1 14 0.8 L15.2 2 Q16.1 3 15.2 4 L14.4 4.8Z" fill="#d6720c"/></svg></div>
<span class="t" style="left:148.65px;top:266px;line-height:19px;letter-spacing:-0.177px;">Purchasing</span>
<span class="t" style="left:604.75px;top:266px;line-height:19px;letter-spacing:0.051px;">Building 2</span>
<span class="t" style="left:725.07px;top:266px;line-height:19px;letter-spacing:-0.561px;">302</span>
<div class="cb" style="left:15px;top:294px"></div>
<div class="a" style="left:67.60000000000002px;top:295.8px"><svg width="16.6" height="16.6" viewBox="0 0 16 16" ><path d="M0.6 15.4 L1.6 11.2 L10.4 2.4 L13.6 5.6 L4.8 14.4Z" fill="#d6720c"/><path d="M11.2 1.6 L12 0.8 Q13 -0.1 14 0.8 L15.2 2 Q16.1 3 15.2 4 L14.4 4.8Z" fill="#d6720c"/></svg></div>
<span class="t" style="left:149.49px;top:295px;line-height:19px;letter-spacing:-0.262px;">Technical Support Services</span>
<span class="t" style="left:604.75px;top:295px;line-height:19px;letter-spacing:0.051px;">Building 2</span>
<span class="t" style="left:725.13px;top:295px;line-height:19px;letter-spacing:-0.538px;">103</span>
<div class="cb" style="left:15px;top:323px"></div>
<div class="a" style="left:67.60000000000002px;top:324.8px"><svg width="16.6" height="16.6" viewBox="0 0 16 16" ><path d="M0.6 15.4 L1.6 11.2 L10.4 2.4 L13.6 5.6 L4.8 14.4Z" fill="#d6720c"/><path d="M11.2 1.6 L12 0.8 Q13 -0.1 14 0.8 L15.2 2 Q16.1 3 15.2 4 L14.4 4.8Z" fill="#d6720c"/></svg></div>
<div class="a" style="left:110.19999999999999px;top:330.3px"><svg width="9.6" height="6.17" viewBox="0 0 9.60 6.17" ><path d="M1.00 1.20 L4.80 4.77 L8.60 1.20" fill="none" stroke="#505050" stroke-width="2.0" stroke-linecap="round" stroke-linejoin="round"/></svg></div>
<span class="t" style="left:129.36px;top:324px;line-height:19px;letter-spacing:-0.127px;">Sales and Marketing</span>
<span class="t" style="left:604.75px;top:324px;line-height:19px;letter-spacing:-0.084px;">Building 1</span>
<span class="t" style="left:725.28px;top:324px;line-height:19px;letter-spacing:-0.813px;">404</span>
<div class="cb" style="left:15px;top:352px"></div>
<div class="a" style="left:67.60000000000002px;top:353.8px"><svg width="16.6" height="16.6" viewBox="0 0 16 16" ><path d="M0.6 15.4 L1.6 11.2 L10.4 2.4 L13.6 5.6 L4.8 14.4Z" fill="#d6720c"/><path d="M11.2 1.6 L12 0.8 Q13 -0.1 14 0.8 L15.2 2 Q16.1 3 15.2 4 L14.4 4.8Z" fill="#d6720c"/></svg></div>
<span class="t" style="left:148.65px;top:353px;line-height:19px;letter-spacing:0.298px;">Marketing</span>
<span class="t" style="left:604.75px;top:353px;line-height:19px;letter-spacing:-0.084px;">Building 1</span>
<span class="t" style="left:725.28px;top:353px;line-height:19px;letter-spacing:-0.711px;">403</span>
<div class="cb" style="left:15px;top:381px"></div>
<div class="a" style="left:67.60000000000002px;top:382.79999999999995px"><svg width="16.6" height="16.6" viewBox="0 0 16 16" ><path d="M0.6 15.4 L1.6 11.2 L10.4 2.4 L13.6 5.6 L4.8 14.4Z" fill="#d6720c"/><path d="M11.2 1.6 L12 0.8 Q13 -0.1 14 0.8 L15.2 2 Q16.1 3 15.2 4 L14.4 4.8Z" fill="#d6720c"/></svg></div>
<span class="t" style="left:149.16px;top:382px;line-height:19px;letter-spacing:-0.349px;">Sales and Client Services</span>
<span class="t" style="left:604.75px;top:382px;line-height:19px;letter-spacing:-0.084px;">Building 1</span>
<span class="t" style="left:725.28px;top:382px;line-height:19px;letter-spacing:-0.667px;">402</span>
<div class="pg" style="left:8px;top:415px"></div>
<span class="t" style="left:20.13px;top:420px;line-height:19px;color:#fff;">1</span>
<span class="t" style="left:676.55px;top:420px;line-height:19px;letter-spacing:-0.598px;">Page Size:</span>
<div class="btn" style="left:745px;top:414px;width:70px;"><span class="t" style="left:6.67px;top:5px;line-height:19px;letter-spacing:0.003px;">All</span><div class="vl" style="left:39px;top:0;height:28px"></div><div class="a" style="left:49.2px;top:12.2px"><svg width="10" height="5" viewBox="0 0 10 5" ><path d="M0 0 L10 0 L5 5Z" fill="#555"/></svg></div></div>
</section>
<div class="a" style="left:1127px;top:152px;width:7px;height:803px;background:#f2f3f3;border-radius:3px 3px 0 0"></div>
<div class="a" style="left:1128.3px;top:546px;width:1.4px;height:14px;background:#505357"></div>
<div class="a" style="left:1131.4px;top:546px;width:1.4px;height:14px;background:#505357"></div>
<div class="btn" style="left:1725px;top:106px;width:30px;"><div class="a" style="left:9.8px;top:6.9px"><svg width="8.4" height="14.4" viewBox="0 0 8.4 14.4" ><path d="M6.9 1.2 L1.4 7.2 L6.9 13.2" fill="none" stroke="#d6720c" stroke-width="2.1" stroke-linecap="butt" stroke-linejoin="miter"/></svg></div></div>
<div class="btn" style="left:1763px;top:106px;width:30px;"><div class="a" style="left:9.4px;top:6.9px"><svg width="8.4" height="14.4" viewBox="0 0 8.4 14.4" ><path d="M1.5 1.2 L7 7.2 L1.5 13.2" fill="none" stroke="#d6720c" stroke-width="2.1" stroke-linecap="butt" stroke-linejoin="miter"/></svg></div></div>
<div class="btn" style="left:1801px;top:106px;width:30px;"><div class="a" style="left:6.4px;top:6.9px"><svg width="15.4" height="14.4" viewBox="0 0 15.4 14.4" ><path d="M2.25 6.43 A5.5 5.5 0 0 1 12.03 3.81" fill="none" stroke="#d6720c" stroke-width="2.5"/><path d="M13.15 7.97 A5.5 5.5 0 0 1 3.37 10.59" fill="none" stroke="#d6720c" stroke-width="2.5"/><path d="M15.4 0.2 L15.4 6.2 L9.4 6.2Z" fill="#d6720c"/><path d="M0 14.2 L0 8.2 L6 8.2Z" fill="#d6720c"/></svg></div></div>
<div class="btn" style="left:1839px;top:106px;width:65px;border-color:#fcaa6f;background:#fcaa6f"><div class="a" style="left:7.2px;top:7.2px"><svg width="13.9" height="13.9" viewBox="0 0 13.9 13.9" ><path d="M0 2 Q0 0 2 0 L10.2 0 L13.9 3.7 L13.9 11.9 Q13.9 13.9 11.9 13.9 L2 13.9 Q0 13.9 0 11.9Z" fill="#fff"/><rect x="2" y="2.4" width="7.9" height="3.1" fill="#fcaa6f"/><circle cx="6.7" cy="9.6" r="2" fill="#fcaa6f"/></svg></div><span class="t" style="left:28.56px;top:5px;line-height:19px;letter-spacing:-1.084px;color:#fff;">Save</span></div>
<label class="t" style="left:1150.95px;top:158px;line-height:19px;letter-spacing:-0.006px;color:#565656;">Name*</label><div class="btn" style="left:1299px;top:152px;width:589px;background:#fff"><span class="t" style="left:5.95px;top:5px;line-height:19px;letter-spacing:-0.221px;">Purchasing</span><div class="a" style="left:565px;top:6px"><svg width="16" height="16" viewBox="0 0 16 16" ><circle cx="8" cy="8" r="8" fill="#cbcbcb"/><path d="M5.1 5.1 L10.9 10.9 M10.9 5.1 L5.1 10.9" stroke="#fff" stroke-width="1.9" stroke-linecap="round"/></svg></div></div>
<label class="t" style="left:1150.95px;top:200px;line-height:19px;letter-spacing:0.032px;color:#565656;">Location</label><div class="btn" style="left:1299px;top:194px;width:589px;background:#fff"><span class="t" style="left:5.95px;top:5px;line-height:19px;letter-spacing:0.051px;">Building 2</span><div class="a" style="left:565px;top:6px"><svg width="16" height="16" viewBox="0 0 16 16" ><circle cx="8" cy="8" r="8" fill="#cbcbcb"/><path d="M5.1 5.1 L10.9 10.9 M10.9 5.1 L5.1 10.9" stroke="#fff" stroke-width="1.9" stroke-linecap="round"/></svg></div></div>
<label class="t" style="left:1151.44px;top:242px;line-height:19px;letter-spacing:-0.005px;color:#565656;">Office</label><div class="btn" style="left:1299px;top:236px;width:589px;background:#fff"><span class="t" style="left:6.57px;top:5px;line-height:19px;letter-spacing:-0.561px;">302</span><div class="a" style="left:565px;top:6px"><svg width="16" height="16" viewBox="0 0 16 16" ><circle cx="8" cy="8" r="8" fill="#cbcbcb"/><path d="M5.1 5.1 L10.9 10.9 M10.9 5.1 L5.1 10.9" stroke="#fff" stroke-width="1.9" stroke-linecap="round"/></svg></div></div>
<label class="t" style="left:1150.95px;top:284px;line-height:19px;letter-spacing:-0.108px;color:#565656;">Number Of Employees</label>
<div class="btn" style="left:1299px;top:278px;width:589px;background:#f8f8f8"><span class="t" style="left:6.54px;top:5px;line-height:19px;">5</span><div class="a" style="left:558px;top:0px;width:30px;height:28px;background:#f3f3f3;border-left:1px solid #c9d0da;border-radius:0 2px 2px 0"></div><div class="a" style="left:567.8px;top:3.8px"><svg width="10" height="5" viewBox="0 0 10 5" ><path d="M0 5 L10 5 L5 0Z" fill="#9a9a9a"/></svg></div><div class="a" style="left:567.8px;top:17.6px"><svg width="10" height="5" viewBox="0 0 10 5" ><path d="M0 0 L10 0 L5 5Z" fill="#9a9a9a"/></svg></div></div>
<label class="t" style="left:1150.95px;top:326px;line-height:19px;letter-spacing:0.028px;color:#565656;">Department Head*</label>
<div class="btn" style="left:1299px;top:320px;width:589px;"><span class="t" style="left:7.07px;top:5px;line-height:19px;letter-spacing:-0.145px;">Allison Etter</span><div class="a" style="left:478px;top:6px"><svg width="16" height="16" viewBox="0 0 16 16" ><circle cx="8" cy="8" r="8" fill="#cbcbcb"/><path d="M5.1 5.1 L10.9 10.9 M10.9 5.1 L5.1 10.9" stroke="#fff" stroke-width="1.9" stroke-linecap="round"/></svg></div><div class="vl" style="left:500px;top:0;height:28px"></div><div class="vl" style="left:529px;top:0;height:28px"></div><div class="vl" style="left:558px;top:0;height:28px"></div><div class="a" style="left:507px;top:6px"><svg width="16.4" height="16.4" viewBox="0 0 16 16" ><path d="M0.6 15.4 L1.6 11.2 L10.4 2.4 L13.6 5.6 L4.8 14.4Z" fill="#555"/><path d="M11.2 1.6 L12 0.8 Q13 -0.1 14 0.8 L15.2 2 Q16.1 3 15.2 4 L14.4 4.8Z" fill="#555"/></svg></div><div class="a" style="left:537.8px;top:7.8px"><svg width="12.5" height="12.5" viewBox="0 0 12.5 12.5" ><path d="M6.25 0.6 L6.25 11.9 M0.6 6.25 L11.9 6.25" stroke="#444" stroke-width="1.9" stroke-linecap="round"/></svg></div><div class="a" style="left:567.8px;top:12.2px"><svg width="10" height="5" viewBox="0 0 10 5" ><path d="M0 0 L10 0 L5 5Z" fill="#555"/></svg></div></div>
<label class="t" style="left:1150.95px;top:368px;line-height:19px;letter-spacing:0.053px;color:#565656;">Description</label>
<div class="btn" style="left:1299px;top:362px;width:589px;height:70px"><span class="t" style="left:6.79px;top:5px;line-height:19px;letter-spacing:-0.053px;">The Purchasing Department acquires the materials and equipment necessary for production</span><span class="t" style="left:6.51px;top:25px;line-height:19px;letter-spacing:0.016px;">and company operations.</span><div class="a" style="left:580px;top:61px"><svg width="8" height="8" viewBox="0 0 8 8" ><path d="M7.5 0.5 L0.5 7.5 M7.5 4 L4 7.5" stroke="#888" stroke-width="1"/></svg></div></div>
<div class="a" style="left:1151px;top:482px;width:737px;height:2px;background:#c9d0da"></div>
<div class="a" style="left:1151px;top:482px;width:120px;height:2px;background:#ff6f0f"></div>
<div class="a" style="left:1167px;top:455.6px"><svg width="16" height="17" viewBox="0 0 16 17" ><circle cx="7.9" cy="4.5" r="4" fill="#6a778d"/><path d="M4.5 4.9 C5.6 3.7 6.8 4.9 7.9 4.3 C9 3.7 10.2 3.9 11.3 4.9 C11.3 7.2 9.8 8.2 7.9 8.2 C6 8.2 4.5 7.2 4.5 4.9Z" fill="#b4b8cc"/><path d="M0.9 15.7 C0.9 12.6 3 11 5 10.7 L10.8 10.7 C12.8 11 14.9 12.6 14.9 15.7 Q14.9 16.7 13.9 16.7 L1.9 16.7 Q0.9 16.7 0.9 15.7Z" fill="#6a778d"/><path d="M4.3 10.5 L11.5 10.5 L9.3 16.1 L6.5 16.1Z" fill="#fff"/><path d="M7.1 10.9 L8.7 10.9 L8.45 11.9 L9 16.7 L6.8 16.7 L7.35 11.9Z" fill="#7c889c"/></svg></div><span class="t" style="left:1188.65px;top:455px;line-height:19px;letter-spacing:-0.325px;color:#f2711c;">Employees</span>
<div class="a" style="left:1289.9px;top:455.3px"><svg width="14.2" height="16.2" viewBox="0 0 14.2 16.2" ><ellipse cx="6.4" cy="3" rx="2.45" ry="3" fill="#747474"/><path d="M1.9 9 C2.2 7.4 3.6 6.6 5.2 6.2 L6.4 7.3 L7.6 6.2 C9.2 6.6 10.7 7.4 11 9Z" fill="#747474"/><path d="M0 9.95 L14.2 9.95 L14.2 16.2 L8.05 16.2 L8.05 12.1 L2.05 12.1 L2.05 16.2 L0 16.2Z" fill="#ffab10"/></svg></div><span class="t" style="left:1311.15px;top:455px;line-height:19px;letter-spacing:-0.182px;">Positions</span>
<div class="a" style="left:1399.9px;top:456.9px"><svg width="16.2" height="14.4" viewBox="0 0 16.2 14.4" ><path d="M4.3 2.3 L8.1 0.4 L11.9 2.3 L11.9 6.1 L8.1 8 L4.3 6.1Z" fill="#0a6ed1" stroke="#0a6ed1" stroke-width="0.8" stroke-linejoin="round"/><path d="M0.4 8.3 L4.2 6.4 L8.0 8.3 L8.0 12.1 L4.2 14.0 L0.4 12.1Z" fill="#0a6ed1" stroke="#0a6ed1" stroke-width="0.8" stroke-linejoin="round"/><path d="M8.2 8.3 L12.0 6.4 L15.8 8.3 L15.8 12.1 L12.0 14.0 L8.2 12.1Z" fill="#0a6ed1" stroke="#0a6ed1" stroke-width="0.8" stroke-linejoin="round"/><path d="M6.050000000000001 2.15 L8.05 1.4 L10.05 2.15 L8.05 2.9Z" fill="#fff"/><path d="M8.9 4.5 L11.0 3.65 L11.0 5.75 L8.9 6.6Z" fill="#fff"/><path d="M2.3 7.9 L4.3 7.15 L6.3 7.9 L4.3 8.65Z" fill="#fff"/><path d="M5.1499999999999995 10.25 L7.25 9.4 L7.25 11.5 L5.1499999999999995 12.350000000000001Z" fill="#fff"/><path d="M10.1 7.9 L12.1 7.15 L14.1 7.9 L12.1 8.65Z" fill="#fff"/><path d="M12.95 10.25 L15.05 9.4 L15.05 11.5 L12.95 12.350000000000001Z" fill="#fff"/></svg></div><span class="t" style="left:1422.15px;top:455px;line-height:19px;letter-spacing:0.031px;">Departments</span>
<div class="btn" style="left:1162px;top:496px;width:30px;"><div class="a" style="left:7.6px;top:7.1px"><svg width="12.7" height="12.7" viewBox="0 0 12.7 12.7" ><path d="M6.35 0.6 L6.35 12.1 M0.6 6.35 L12.1 6.35" stroke="#d6720c" stroke-width="2" stroke-linecap="round"/></svg></div></div>
<div class="btn" style="left:1200px;top:496px;width:30px;"><div class="a" style="left:6.1px;top:6.1px"><svg width="15.8" height="15.8" viewBox="0 0 15.8 15.8" ><rect x="0" y="5" width="10.8" height="10.8" rx="1.9" fill="#c9dff3"/><rect x="5" y="0" width="10.8" height="10.8" rx="1.9" fill="#94c2e8"/></svg></div></div>
<div class="btn" style="left:1238px;top:496px;width:30px;"><div class="a" style="left:5.9px;top:5.9px"><svg width="16.1" height="16.1" viewBox="0 0 16.1 16.1" ><rect x="0.5" y="7.6" width="10.2" height="5.8" rx="2.9" transform="rotate(-45 5.6 10.5)" fill="none" stroke="#7952b8" stroke-width="2.0" stroke-dasharray="1.4 3.2 30" stroke-linecap="butt"/><rect x="5.4" y="2.6999999999999997" width="10.2" height="5.8" rx="2.9" transform="rotate(-45 10.5 5.6)" fill="none" stroke="#7952b8" stroke-width="2.0" stroke-dasharray="15.1 3.2 30" stroke-linecap="butt"/></svg></div></div>
<div class="btn" style="left:1276px;top:496px;width:30px;"><div class="a" style="left:5.9px;top:5.9px"><svg width="16.1" height="16.1" viewBox="0 0 16.1 16.1" ><rect x="0.5" y="7.6" width="10.2" height="5.8" rx="2.9" transform="rotate(-45 5.6 10.5)" fill="none" stroke="#e3daf3" stroke-width="2.0" stroke-dasharray="1.4 3.2 30" stroke-linecap="butt"/><rect x="5.4" y="2.6999999999999997" width="10.2" height="5.8" rx="2.9" transform="rotate(-45 10.5 5.6)" fill="none" stroke="#e3daf3" stroke-width="2.0" stroke-dasharray="15.1 3.2 30" stroke-linecap="butt"/><path d="M0.9 0.9 L15.2 15.2" stroke="#c9b5e6" stroke-width="1.9"/></svg></div></div>
<div class="btn" style="left:1314px;top:496px;width:30px;"><div class="a" style="left:7px;top:6.1px"><svg width="13.9" height="15.9" viewBox="0 0 13.9 15.9" ><path d="M0 1.6 Q0 1 0.6 1 L4 1 L4.6 0.3 Q4.9 0 5.3 0 L8.6 0 Q9 0 9.3 0.3 L9.9 1 L13.3 1 Q13.9 1 13.9 1.6 L13.9 2.8 L0 2.8Z" fill="#e8919c"/><path d="M1.1 2.8 L12.8 2.8 L12.1 14.4 Q12 15.9 10.5 15.9 L3.4 15.9 Q1.9 15.9 1.8 14.4Z" fill="#f6d3d7"/><path d="M5.1 5.8 L5.1 12.9 M8.8 5.8 L8.8 12.9" stroke="#ea9aa4" stroke-width="1.4" stroke-linecap="round"/></svg></div></div>
<div class="btn" style="left:1352px;top:496px;width:53px;"><div class="a" style="left:8.1px;top:6px"><svg width="11.7" height="16" viewBox="0 0 11.7 16" ><rect x="0" y="2" width="11.7" height="14" rx="1.2" fill="#e3dcf0"/><circle cx="5.85" cy="1.6" r="1.25" fill="none" stroke="#c9b8e6" stroke-width="1"/><rect x="2" y="3" width="7.7" height="1.6" fill="#c9b8e6"/><circle cx="5.2" cy="9.4" r="2.3" fill="none" stroke="#b4a3d9" stroke-width="1.15"/><path d="M6.9 11.1 L9.3 13.5" stroke="#b4a3d9" stroke-width="1.2" stroke-linecap="round"/></svg></div><div class="vl" style="left:28px;top:0;height:28px"></div><div class="a" style="left:35.1px;top:12px"><svg width="10" height="5" viewBox="0 0 10 5" ><path d="M0 0 L10 0 L5 5Z" fill="#9a9a9a"/></svg></div></div>
<div class="btn" style="left:1413px;top:496px;width:230px;"><span class="t" style="left:6.99px;top:5px;line-height:19px;letter-spacing:-0.333px;color:#8f8f8f;">Text to search...</span><div class="vl" style="left:199px;top:0;height:28px"></div><div class="a" style="left:205.9px;top:5.9px"><svg width="16.1" height="16.1" viewBox="0 0 16.1 16.1" ><circle cx="6.65" cy="6.65" r="5.5" fill="none" stroke="#d6720c" stroke-width="2.3"/><path d="M10.7 10.7 L15 15" stroke="#d6720c" stroke-width="2.4" stroke-linecap="round"/></svg></div></div>
<div class="btn" style="left:1651px;top:496px;width:53px;"><div class="a" style="left:6px;top:7.1px"><svg width="16.4" height="13.8" viewBox="0 0 16.4 13.8" ><path d="M5.9 1.1 L3 1.1 Q1.1 1.1 1.1 3 L1.1 10.8 Q1.1 12.7 3 12.7 L5.9 12.7" fill="none" stroke="#d6720c" stroke-width="2.2"/><path d="M5.3 6.75 L14.6 6.75 M10.7 2.7 L15 6.75 L10.7 10.9" fill="none" stroke="#d6720c" stroke-width="2.3" stroke-linejoin="round"/></svg></div><div class="vl" style="left:28px;top:0;height:28px"></div><div class="a" style="left:34.8px;top:12px"><svg width="10" height="5" viewBox="0 0 10 5" ><path d="M0 0 L10 0 L5 5Z" fill="#555"/></svg></div></div>
<section class="a" style="left:1162px;top:538px;width:714px;height:222px;border:1px solid #c9d0da;background:#fff">
<div class="a" style="left:0px;top:0px;width:712px;height:28px;background:#f0f0f0"></div>
<div class="a" style="left:0px;top:28px;width:712px;height:1px;background:#c9d0da"></div>
<div class="a" style="left:0px;top:57px;width:712px;height:1px;background:#c9d0da"></div>
<div class="a" style="left:0px;top:86px;width:712px;height:1px;background:#c9d0da"></div>
<div class="a" style="left:0px;top:115px;width:712px;height:1px;background:#c9d0da"></div>
<div class="a" style="left:0px;top:144px;width:712px;height:1px;background:#c9d0da"></div>
<div class="a" style="left:0px;top:173px;width:712px;height:1px;background:#c9d0da"></div>
<div class="a" style="left:50px;top:0px;width:1px;height:174px;background:#c9d0da"></div>
<div class="a" style="left:204px;top:0px;width:1px;height:174px;background:#c9d0da"></div>
<div class="a" style="left:358px;top:0px;width:1px;height:174px;background:#c9d0da"></div>
<div class="a" style="left:512px;top:0px;width:1px;height:174px;background:#c9d0da"></div>
<div class="cb" style="left:15px;top:4px"></div>
<b class="t" style="left:57.06px;top:5px;line-height:19px;font-weight:bold;letter-spacing:-0.311px;">Full Name</b>
<b class="t" style="left:211.06px;top:5px;line-height:19px;font-weight:bold;letter-spacing:-0.242px;">Birth Date</b>
<b class="t" style="left:364.96px;top:5px;line-height:19px;font-weight:bold;letter-spacing:-0.574px;">Position</b>
<b class="t" style="left:519.06px;top:5px;line-height:19px;font-weight:bold;letter-spacing:-0.706px;">Email</b>
<div class="a" style="left:156.9000000000001px;top:7.7000000000000455px"><svg width="7.2" height="13" viewBox="0 0 7.2 13" ><path d="M3.6 0 L7.2 4.2 L0 4.2Z" fill="#1d2126"/><path d="M3.6 3.5 L3.6 12.2" stroke="#1d2126" stroke-width="1.8" stroke-linecap="round"/></svg></div>
<div class="a" style="left:180.20000000000005px;top:7px"><svg width="12.1" height="13.8" viewBox="0 0 12.1 13.8" ><path d="M0.7 0.9 L11.4 0.9 L11.4 3.4 L7.3 6.9 L7.3 12.7 L4.8 11.8 L4.8 6.9 L0.7 3.4Z" fill="none" stroke="#1d2126" stroke-width="1.4" stroke-linejoin="round"/></svg></div>
<div class="a" style="left:334px;top:7px"><svg width="12.1" height="13.8" viewBox="0 0 12.1 13.8" ><path d="M0.7 0.9 L11.4 0.9 L11.4 3.4 L7.3 6.9 L7.3 12.7 L4.8 11.8 L4.8 6.9 L0.7 3.4Z" fill="none" stroke="#1d2126" stroke-width="1.4" stroke-linejoin="round"/></svg></div>
<div class="a" style="left:487.9000000000001px;top:7px"><svg width="12.1" height="13.8" viewBox="0 0 12.1 13.8" ><path d="M0.7 0.9 L11.4 0.9 L11.4 3.4 L7.3 6.9 L7.3 12.7 L4.8 11.8 L4.8 6.9 L0.7 3.4Z" fill="none" stroke="#1d2126" stroke-width="1.4" stroke-linejoin="round"/></svg></div>
<div class="a" style="left:687.7px;top:7px"><svg width="12.1" height="13.8" viewBox="0 0 12.1 13.8" ><path d="M0.7 0.9 L11.4 0.9 L11.4 3.4 L7.3 6.9 L7.3 12.7 L4.8 11.8 L4.8 6.9 L0.7 3.4Z" fill="none" stroke="#1d2126" stroke-width="1.4" stroke-linejoin="round"/></svg></div>
<div class="cb" style="left:15px;top:33px"></div>
<span class="t" style="left:57.97px;top:34px;line-height:19px;letter-spacing:-0.136px;">Allison Etter</span>
<span class="t" style="left:211.43px;top:34px;line-height:19px;letter-spacing:0.162px;">10/21/1969</span>
<a class="t" style="left:365.30px;top:34px;line-height:19px;letter-spacing:-0.166px;"><u>Purchasing Manager</u></a>
<span class="t" style="left:519.97px;top:34px;line-height:19px;letter-spacing:-0.242px;">Allison_Etter@example.com</span>
<div class="cb" style="left:15px;top:62px"></div>
<span class="t" style="left:57.97px;top:63px;line-height:19px;letter-spacing:-0.089px;">Angela Mccallum</span>
<span class="t" style="left:211.34px;top:63px;line-height:19px;letter-spacing:0.218px;">9/1/1979</span>
<a class="t" style="left:365.30px;top:63px;line-height:19px;letter-spacing:-0.213px;"><u>Purchasing Assistant</u></a>
<span class="t" style="left:519.97px;top:63px;line-height:19px;letter-spacing:-0.261px;">Angela_Mccallum@example....</span>
<div class="cb" style="left:15px;top:91px"></div>
<span class="t" style="left:57.97px;top:92px;line-height:19px;letter-spacing:-0.204px;">Anita Benson</span>
<span class="t" style="left:211.47px;top:92px;line-height:19px;letter-spacing:0.13px;">3/18/1985</span>
<a class="t" style="left:365.30px;top:92px;line-height:19px;letter-spacing:-0.166px;"><u>Purchasing Manager</u></a>
<span class="t" style="left:519.97px;top:92px;line-height:19px;letter-spacing:-0.308px;">Anita_Benson@example.com</span>
<div class="cb" style="left:15px;top:120px"></div>
<span class="t" style="left:57.97px;top:121px;line-height:19px;letter-spacing:-0.186px;">Archie Matese</span>
<span class="t" style="left:211.30px;top:121px;line-height:19px;letter-spacing:0.166px;">2/10/1982</span>
<a class="t" style="left:365.30px;top:121px;line-height:19px;letter-spacing:-0.277px;"><u>Purchasing Engineer</u></a>
<span class="t" style="left:519.97px;top:121px;line-height:19px;letter-spacing:-0.271px;">Archie_Matese@example.com</span>
<div class="cb" style="left:15px;top:149px"></div>
<span class="t" style="left:57.97px;top:150px;line-height:19px;letter-spacing:-0.413px;">Arvil Chase</span>
<span class="t" style="left:211.29px;top:150px;line-height:19px;letter-spacing:0.155px;">6/26/1978</span>
<a class="t" style="left:365.30px;top:150px;line-height:19px;letter-spacing:-0.277px;"><u>Purchasing Engineer</u></a>
<span class="t" style="left:519.97px;top:150px;line-height:19px;letter-spacing:-0.395px;">Arvil_Chase@example.com</span>
<div class="pg" style="left:8px;top:183px"></div>
<span class="t" style="left:20.13px;top:188px;line-height:19px;color:#fff;">1</span>
<span class="t" style="left:565.65px;top:188px;line-height:19px;letter-spacing:-0.587px;">Page Size:</span>
<div class="btn" style="left:634px;top:182px;width:70px;"><span class="t" style="left:6.90px;top:5px;line-height:19px;letter-spacing:-0.321px;">20</span><div class="vl" style="left:39px;top:0;height:28px"></div><div class="a" style="left:49.5px;top:12.3px"><svg width="10" height="5" viewBox="0 0 10 5" ><path d="M0 0 L10 0 L5 5Z" fill="#555"/></svg></div></div>
</section>
</body></html>
